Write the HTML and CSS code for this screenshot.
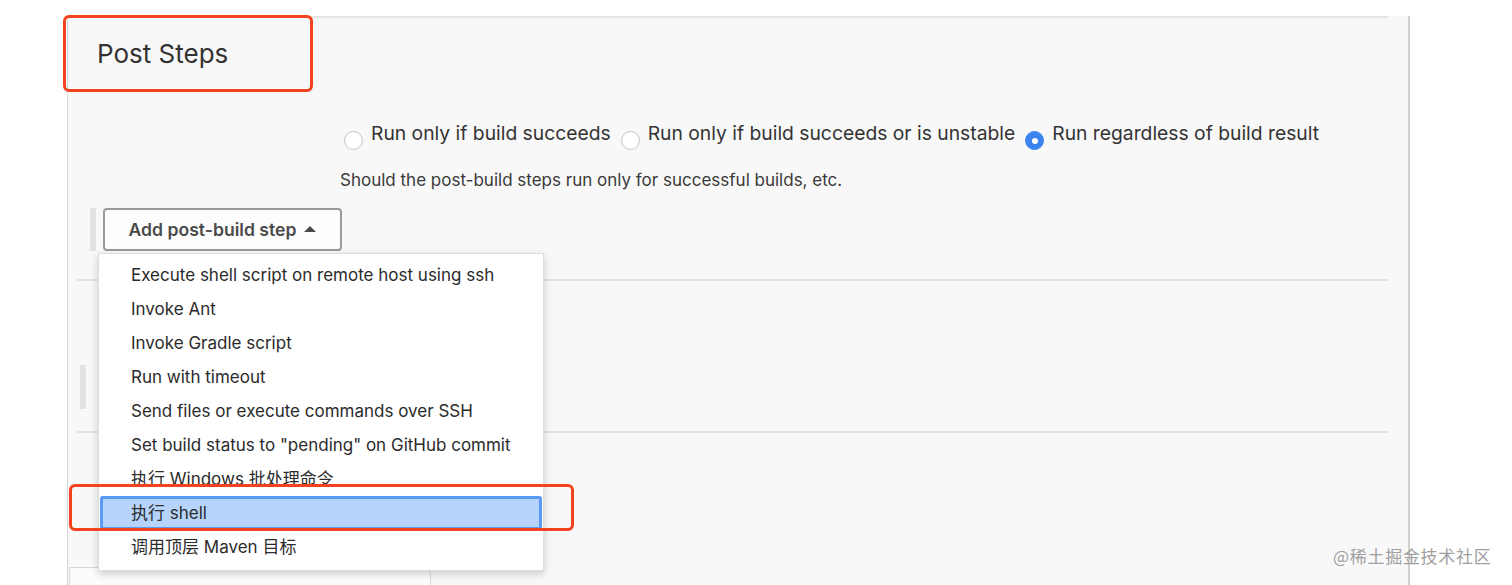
FILE: index.html
```
<!DOCTYPE html>
<html lang="en">
<head>
<meta charset="utf-8">
<title>Post Steps</title>
<link rel="stylesheet" href="styles.css">
</head>
<body>
<div class="page">
  <div class="panel">
    <div class="divider top"></div>
    <h2 class="section-title">Post Steps</h2>
    <div class="radio-row">
      <label class="radio"><span class="dot"></span><span class="radio-text">Run only if build succeeds</span></label>
      <label class="radio"><span class="dot"></span><span class="radio-text">Run only if build succeeds or is unstable</span></label>
      <label class="radio"><span class="dot checked"></span><span class="radio-text">Run regardless of build result</span></label>
    </div>
    <div class="help">Should the post-build steps run only for successful builds, etc.</div>
    <div class="button-row">
      <span class="handle"></span>
      <div class="btn-wrap">
        <button class="add-btn">Add post-build step <span class="caret"></span></button>
        <ul class="menu">
          <li>Execute shell script on remote host using ssh</li>
          <li>Invoke Ant</li>
          <li>Invoke Gradle script</li>
          <li>Run with timeout</li>
          <li>Send files or execute commands over SSH</li>
          <li>Set build status to "pending" on GitHub commit</li>
          <li>执行 Windows 批处理命令</li>
          <li class="selected">执行 shell</li>
          <li>调用顶层 Maven 目标</li>
        </ul>
      </div>
    </div>
    <div class="divider mid"></div>
    <div class="section-two">
      <span class="handle small"></span>
    </div>
    <div class="divider mid"></div>
    <div class="bottom-box"></div>
  </div>
  <div class="annot annot-title"></div>
  <div class="annot annot-item"></div>
  <div class="watermark">@稀土掘金技术社区</div>
</div>
</body>
</html>
```
FILE: styles.css
```
* { box-sizing: border-box; }
html, body {
  margin: 0;
  padding: 0;
  background: #ffffff;
  font-family: Inter, "Liberation Sans", "Noto Sans CJK SC", sans-serif;
  color: #333333;
}
.page {
  position: relative;
  width: 1512px;
  height: 585px;
  overflow: hidden;
}
.panel {
  margin-left: 67px;
  width: 1343px;
  height: 585px;
  background: #f8f8f8;
  border-left: 1px solid #d4d4d4;
  border-right: 2px solid #d0d0d0;
  padding-right: 20px;
}
.divider {
  height: 2px;
  background: #e4e4e4;
}
.divider.top {
  margin-top: 16px;
}
.divider.mid {
  margin-left: 9px;
}
.section-title {
  margin: 0;
  padding: 18px 0 0 29px;
  height: 104px;
  font-size: 26px;
  font-weight: normal;
  color: #333333;
  line-height: 36px;
}
.radio-row {
  display: flex;
  align-items: flex-start;
  padding-left: 276px;
  height: 48px;
  gap: 10px;
}
.radio {
  display: flex;
  align-items: flex-start;
  gap: 8px;
  font-size: 19.3px;
  line-height: 22px;
  color: #333333;
}
.dot {
  width: 19px;
  height: 19px;
  border-radius: 50%;
  border: 1px solid #c4c4c4;
  background: #ffffff;
  margin-top: 9px;
  flex-shrink: 0;
  position: relative;
}
.dot.checked {
  background: #3b84f0;
  border-color: #3b84f0;
}
.dot.checked::after {
  content: "";
  position: absolute;
  left: 5.5px;
  top: 5.5px;
  width: 6px;
  height: 6px;
  border-radius: 50%;
  background: #ffffff;
}
.help {
  padding-left: 272px;
  font-size: 17px;
  line-height: 20px;
  color: #3a3a3a;
  height: 38px;
}
.button-row {
  display: flex;
  align-items: stretch;
  padding-left: 22px;
  height: 71px;
}
.handle {
  width: 6px;
  height: 43px;
  background: #e2e2e2;
  margin-right: 7px;
}
.btn-wrap {
  position: relative;
}
.add-btn {
  width: 239px;
  height: 43px;
  border: 2px solid #9a9a9a;
  border-radius: 4px;
  background: #fdfdfd;
  font-family: Inter, "Liberation Sans", sans-serif;
  font-size: 17.6px;
  font-weight: 600;
  color: #4a4a4a;
  padding: 0;
  display: flex;
  align-items: center;
  justify-content: center;
  gap: 8px;
}
.caret {
  width: 0;
  height: 0;
  border-left: 6px solid transparent;
  border-right: 6px solid transparent;
  border-bottom: 6px solid #4a4a4a;
  margin-top: -1px;
}
.menu {
  position: absolute;
  left: -5px;
  top: 45px;
  width: 446px;
  margin: 0;
  padding: 4px 1px 6px 1px;
  list-style: none;
  background: #ffffff;
  border: 1px solid #dedede;
  box-shadow: 0 3px 8px rgba(0, 0, 0, 0.18);
  z-index: 5;
}
.menu li {
  height: 34px;
  line-height: 34px;
  padding-left: 31px;
  font-size: 17px;
  color: #2b2b2b;
  white-space: nowrap;
}
.menu li.selected {
  background: #b6d4fb;
  box-shadow: inset 0 0 0 3px #5a9af5;
  border-radius: 3px;
}
.section-two {
  height: 150px;
  padding-left: 12px;
  padding-top: 84px;
}
.handle.small {
  display: block;
  width: 6px;
  height: 44px;
  background: #e2e2e2;
}
.bottom-box {
  margin-top: 134px;
  margin-left: 1px;
  width: 362px;
  height: 40px;
  border: 1px solid #cfdccf;
  border-bottom: none;
  border-radius: 0 8px 0 0;
  background: #fbfbfb;
}
.annot {
  position: absolute;
  border: 3px solid #f2421e;
  border-radius: 6px;
  z-index: 10;
}
.annot-title {
  left: 63px;
  top: 15px;
  width: 250px;
  height: 77px;
}
.annot-item {
  left: 69px;
  top: 484px;
  width: 505px;
  height: 47px;
}
.watermark {
  position: absolute;
  left: 1333px;
  top: 543px;
  font-size: 17px;
  color: #a0a0a0;
  font-family: "Noto Sans CJK SC", "Liberation Sans", sans-serif;
  letter-spacing: 0.7px;
  z-index: 10;
}
```
